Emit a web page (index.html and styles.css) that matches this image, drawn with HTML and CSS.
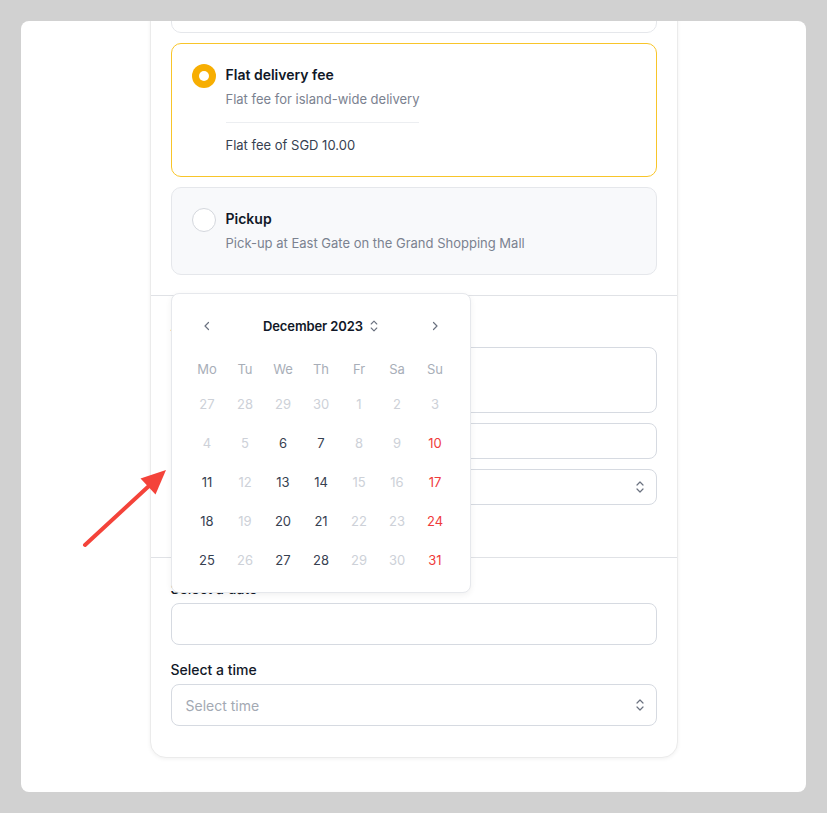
FILE: index.html
```html
<!DOCTYPE html>
<html lang="en">
<head>
<meta charset="utf-8">
<title>Checkout</title>
<link rel="stylesheet" href="styles.css">
</head>
<body>
<div class="frame">
  <div class="card">
    <section class="section">
      <div class="options">
        <div class="option clipped">
          <span class="radio"></span>
        </div>
        <div class="option selected">
          <span class="radio checked"></span>
          <div class="option-body">
            <div class="option-title">Flat delivery fee</div>
            <div class="option-sub">Flat fee for island-wide delivery</div>
            <div class="option-extra">Flat fee of SGD 10.00</div>
          </div>
        </div>
        <div class="option muted">
          <span class="radio"></span>
          <div class="option-body">
            <div class="option-title">Pickup</div>
            <div class="option-sub">Pick-up at East Gate on the Grand Shopping Mall</div>
          </div>
        </div>
      </div>
    </section>
    <section class="section address">
      <div class="label">Address</div>
      <div class="box textarea"></div>
      <div class="box input"></div>
      <div class="box select">
        <span></span>
        <svg class="updown" width="12" height="16" viewBox="0 0 12 16"><path d="M3 6 L6 3 L9 6 M3 10 L6 13 L9 10" fill="none" stroke="#6b7280" stroke-width="1.2" stroke-linecap="round" stroke-linejoin="round"/></svg>
      </div>
      <div class="check-row"><span class="check"></span></div>
    </section>
    <section class="section schedule">
      <div class="field">
        <div class="label">Select a date</div>
        <div class="box tall"></div>
      </div>
      <div class="field">
        <div class="label">Select a time</div>
        <div class="box tall select">
          <span class="placeholder">Select time</span>
          <svg class="updown" width="12" height="16" viewBox="0 0 12 16"><path d="M3 6 L6 3 L9 6 M3 10 L6 13 L9 10" fill="none" stroke="#6b7280" stroke-width="1.2" stroke-linecap="round" stroke-linejoin="round"/></svg>
        </div>
      </div>
    </section>
  </div>
  <div class="card next"></div>

  <div class="calendar">
    <div class="cal-head">
      <span class="nav"><svg width="10" height="12" viewBox="0 0 10 12"><path d="M6.5 2.5 L3 6 L6.5 9.5" fill="none" stroke="#6b7280" stroke-width="1.2" stroke-linecap="round" stroke-linejoin="round"/></svg></span>
      <span class="month">December 2023
        <svg width="10" height="14" viewBox="0 0 10 14"><path d="M2.2 5 L5 2.2 L7.8 5 M2.2 9 L5 11.8 L7.8 9" fill="none" stroke="#6b7280" stroke-width="1.1" stroke-linecap="round" stroke-linejoin="round"/></svg>
      </span>
      <span class="nav"><svg width="10" height="12" viewBox="0 0 10 12"><path d="M3.5 2.5 L7 6 L3.5 9.5" fill="none" stroke="#6b7280" stroke-width="1.2" stroke-linecap="round" stroke-linejoin="round"/></svg></span>
    </div>
    <div class="cal-week">
      <span>Mo</span><span>Tu</span><span>We</span><span>Th</span><span>Fr</span><span>Sa</span><span>Su</span>
    </div>
    <div class="cal-days">
      <span class="off">27</span><span class="off">28</span><span class="off">29</span><span class="off">30</span><span class="off">1</span><span class="off">2</span><span class="off">3</span>
      <span class="off">4</span><span class="off">5</span><span>6</span><span>7</span><span class="off">8</span><span class="off">9</span><span class="sun">10</span>
      <span>11</span><span class="off">12</span><span>13</span><span>14</span><span class="off">15</span><span class="off">16</span><span class="sun">17</span>
      <span>18</span><span class="off">19</span><span>20</span><span>21</span><span class="off">22</span><span class="off">23</span><span class="sun">24</span>
      <span>25</span><span class="off">26</span><span>27</span><span>28</span><span class="off">29</span><span class="off">30</span><span class="sun">31</span>
    </div>
  </div>
</div>

<svg class="pointer" width="200" height="600" viewBox="0 0 200 600">
  <line x1="85" y1="545" x2="150" y2="485" stroke="#f4433a" stroke-width="4" stroke-linecap="round"/>
  <polygon points="166,470 155.5,494.5 140.5,478.5" fill="#f4433a"/>
</svg>
</body>
</html>
```

FILE: styles.css
```css
* { box-sizing: border-box; }

html, body {
  margin: 0;
  padding: 0;
}

body {
  background: #d1d1d1;
  padding: 21px;
  font-family: Inter, "Noto Sans", "Liberation Sans", sans-serif;
  color: #111827;
  position: relative;
  height: 813px;
  overflow: hidden;
}

.frame {
  position: relative;
  background: #ffffff;
  border-radius: 8px;
  height: 771px;
  overflow: hidden;
  display: flow-root;
}

.card {
  width: 528px;
  margin: -97px auto 0;
  background: #ffffff;
  border: 1px solid #ebebeb;
  border-radius: 16px;
  box-shadow: 0 1px 4px rgba(0, 0, 0, 0.06);
}

.card.next {
  margin-top: 34px;
  height: 200px;
}

.section {
  padding: 20px;
}

.section + .section {
  border-top: 1px solid #e0e2e6;
}

.options {
  display: flex;
  flex-direction: column;
  gap: 10px;
}

.option {
  display: flex;
  align-items: flex-start;
  gap: 10px;
  padding: 20px;
  border: 1px solid #e5e7eb;
  border-radius: 10px;
  background: #ffffff;
}

.option.clipped {
  height: 88px;
}

.option.selected {
  border-color: #f8c52a;
}

.option.muted {
  background: #f8f9fb;
}

.radio {
  flex: none;
  width: 24px;
  height: 24px;
  border-radius: 50%;
  border: 1px solid #d4d7dd;
  background: #ffffff;
  display: flex;
  align-items: center;
  justify-content: center;
}

.radio.checked {
  border: none;
  background: #f7ae02;
}

.radio.checked::after {
  content: "";
  width: 10px;
  height: 10px;
  border-radius: 50%;
  background: #ffffff;
}

.option-body {
  display: flex;
  flex-direction: column;
}

.option-title {
  font-size: 14px;
  line-height: 21px;
  font-weight: 600;
  color: #111827;
}

.option-sub {
  margin-top: 4px;
  font-size: 13px;
  line-height: 21px;
  color: #7b8290;
}

.option-extra {
  margin-top: 12px;
  padding-top: 12px;
  border-top: 1px solid #eceef1;
  font-size: 13px;
  line-height: 21px;
  color: #374151;
}

.label {
  font-size: 14px;
  line-height: 20px;
  font-weight: 500;
  color: #111827;
}

.box {
  border: 1px solid #d6dae1;
  border-radius: 8px;
  background: #ffffff;
}

.address {
  display: flex;
  flex-direction: column;
  gap: 10px;
}

.address .label {
  margin-bottom: 1px;
}

.textarea { height: 66px; }
.input { height: 36px; }

.select {
  height: 36px;
  display: flex;
  align-items: center;
  justify-content: space-between;
  padding: 0 10px 0 14px;
}

.updown { display: block; }

.check-row {
  display: flex;
  align-items: center;
  height: 22px;
}

.check {
  width: 16px;
  height: 16px;
  border: 1px solid #d1d5db;
  border-radius: 4px;
}

.schedule {
  padding: 21px 20px 31px;
  display: flex;
  flex-direction: column;
  gap: 15px;
}

.field {
  display: flex;
  flex-direction: column;
  gap: 4px;
}

.box.tall {
  height: 42px;
}

.placeholder {
  font-size: 14px;
  color: #a3a9b3;
}

/* calendar popover */
.calendar {
  position: absolute;
  left: 150px;
  top: 272px;
  width: 300px;
  height: 300px;
  background: #ffffff;
  border: 1px solid #e6e8ec;
  border-radius: 8px;
  box-shadow: 0 2px 6px rgba(0, 0, 0, 0.06);
  padding: 16px 16px 13px;
}

.cal-head {
  display: grid;
  grid-template-columns: 38px 1fr 38px;
  align-items: center;
  height: 32px;
}

.nav {
  display: flex;
  justify-content: center;
}

.month {
  display: flex;
  align-items: center;
  justify-content: center;
  gap: 6px;
  font-size: 13px;
  font-weight: 600;
  letter-spacing: -0.1px;
  color: #111827;
}

.cal-week {
  margin-top: 12px;
  display: grid;
  grid-template-columns: repeat(7, 38px);
  height: 30px;
  align-items: center;
  text-align: center;
  font-size: 13px;
  color: #a8aeb8;
}

.cal-days {
  display: grid;
  grid-template-columns: repeat(7, 38px);
  grid-auto-rows: 39px;
  align-items: center;
  text-align: center;
  font-size: 13px;
  color: #374151;
}

.cal-days .off {
  color: #cdd1d8;
}

.cal-days .sun {
  color: #ef3b3b;
}

.pointer {
  position: absolute;
  left: 0;
  top: 0;
  pointer-events: none;
}
```
